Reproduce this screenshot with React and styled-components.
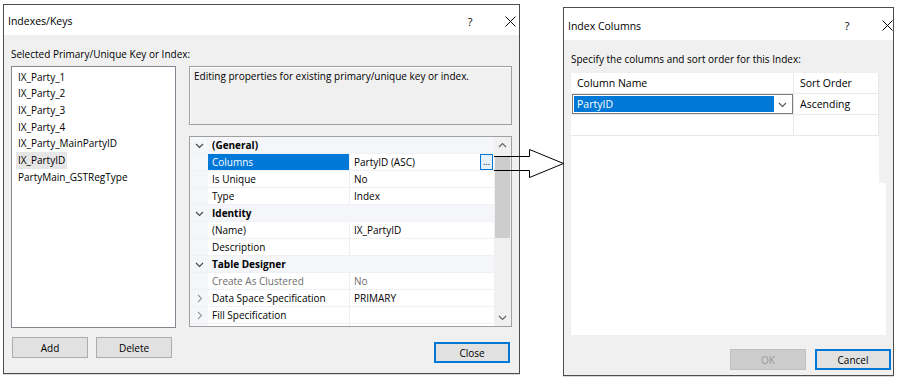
import React from "react";
import styled, { createGlobalStyle, css } from "styled-components";

const GlobalStyle = createGlobalStyle`
  html, body {
    margin: 0;
    padding: 0;
    background: #ffffff;
  }
  body {
    font-family: "Open Sans", "Noto Sans", sans-serif;
    font-size: 10px;
    color: #000;
  }
`;

const indexes = [
  "IX_Party_1",
  "IX_Party_2",
  "IX_Party_3",
  "IX_Party_4",
  "IX_Party_MainPartyID",
  "IX_PartyID",
  "PartyMain_GSTRegType"
];

const properties = [
  { category: true, name: "(General)" },
  { name: "Columns", value: "PartyID (ASC)", selected: true, ellipsis: true },
  { name: "Is Unique", value: "No" },
  { name: "Type", value: "Index" },
  { category: true, name: "Identity" },
  { name: "(Name)", value: "IX_PartyID" },
  { name: "Description", value: "" },
  { category: true, name: "Table Designer" },
  { name: "Create As Clustered", value: "No", disabled: true },
  { name: "Data Space Specification", value: "PRIMARY", expand: true },
  { name: "Fill Specification", value: "", expand: true },
  { name: "", value: "" }
];

const CloseGlyph = () => (
  <svg width="11" height="11" viewBox="0 0 11 11">
    <path d="M0.5 0.5 L10.5 10.5 M10.5 0.5 L0.5 10.5" stroke="#000" strokeWidth="1" fill="none" />
  </svg>
);

const Chevron = ({ dir = "down", color = "#555" }) => (
  <svg width="9" height="9" viewBox="0 0 9 9">
    {dir === "down" && <path d="M1 3 L4.5 6.5 L8 3" stroke={color} strokeWidth="1.1" fill="none" />}
    {dir === "up" && <path d="M1 6 L4.5 2.5 L8 6" stroke={color} strokeWidth="1.1" fill="none" />}
    {dir === "right" && <path d="M3 1 L6.5 4.5 L3 8" stroke={color} strokeWidth="1.1" fill="none" />}
  </svg>
);

const App = () => (
  <>
    <GlobalStyle />
    <Screen>
      <Dialog $top={4} $left={3} $width={517} $height={370}>
        <TitleBar $padTop={2}>
          <TitleText>Indexes/Keys</TitleText>
          <TitleActions $right={3}>
            <TitleButton>?</TitleButton>
            <TitleButton>
              <CloseGlyph />
            </TitleButton>
          </TitleActions>
        </TitleBar>
        <Body>
          <Caption>Selected Primary/Unique Key or Index:</Caption>
          <Panes>
            <ListPane>
              <ListBox>
                {indexes.map(name => (
                  <ListItem key={name} $selected={name === "IX_PartyID"}>
                    {name}
                  </ListItem>
                ))}
              </ListBox>
              <ButtonRow>
                <Button>Add</Button>
                <Button>Delete</Button>
              </ButtonRow>
            </ListPane>
            <DetailPane>
              <DescBox>Editing properties for existing primary/unique key or index.</DescBox>
              <PropGrid>
                <PropRows>
                  {properties.map((p, i) =>
                    p.category ? (
                      <CategoryRow key={i}>
                        <Gutter>
                          <Chevron dir="down" color="#444" />
                        </Gutter>
                        <CategoryName>{p.name}</CategoryName>
                      </CategoryRow>
                    ) : (
                      <PropRow key={i}>
                        <Gutter>{p.expand && <Chevron dir="right" color="#999" />}</Gutter>
                        <PropName $selected={p.selected} $disabled={p.disabled}>
                          {p.name}
                        </PropName>
                        <PropValue $disabled={p.disabled}>
                          {p.value}
                          {p.ellipsis && <EllipsisButton>...</EllipsisButton>}
                        </PropValue>
                      </PropRow>
                    )
                  )}
                </PropRows>
                <ScrollBar>
                  <ScrollArrow>
                    <Chevron dir="up" color="#606060" />
                  </ScrollArrow>
                  <ScrollTrack>
                    <ScrollThumb />
                  </ScrollTrack>
                  <ScrollArrow>
                    <Chevron dir="down" color="#606060" />
                  </ScrollArrow>
                </ScrollBar>
              </PropGrid>
              <FooterRow $pad={2}>
                <Button $default>Close</Button>
              </FooterRow>
            </DetailPane>
          </Panes>
        </Body>
      </Dialog>

      <Dialog $top={7} $left={43} $width={331} $height={369}>
        <TitleBar $height={32} $padTop={3}>
          <TitleText>Index Columns</TitleText>
          <TitleActions $right={0}>
            <TitleButton>?</TitleButton>
            <TitleButton>
              <CloseGlyph />
            </TitleButton>
          </TitleActions>
        </TitleBar>
        <Body $padRight={2}>
          <Caption $gap={7}>Specify the columns and sort order for this Index:</Caption>
          <ColumnGrid>
            <ColumnTable>
              <GridRow>
                <GridCell $width={223}>Column Name</GridCell>
                <GridCell $width={85}>Sort Order</GridCell>
              </GridRow>
              <GridRow>
                <GridCell $width={223} $flush>
                  <Combo>
                    <ComboValue>PartyID</ComboValue>
                    <ComboDrop>
                      <Chevron dir="down" color="#555" />
                    </ComboDrop>
                  </Combo>
                </GridCell>
                <GridCell $width={85}>Ascending</GridCell>
              </GridRow>
              <GridRow>
                <GridCell $width={223} />
                <GridCell $width={85} />
              </GridRow>
            </ColumnTable>
            <GridSide />
          </ColumnGrid>
          <FooterRow $gap={9} $top={14} $pad={0}>
            <Button $disabled>OK</Button>
            <Button $default>Cancel</Button>
          </FooterRow>
        </Body>
      </Dialog>

      <Pointer width="72" height="33" viewBox="0 0 72 33">
        <path
          d="M1 9.5 H36.5 V2.5 L70.5 16.5 L36.5 30.5 V23.5 H1"
          stroke="#000"
          strokeWidth="1"
          fill="none"
        />
      </Pointer>
    </Screen>
  </>
);

export default App;

const Screen = styled.div`
  position: relative;
  width: 900px;
  height: 379px;
  display: flex;
  align-items: flex-start;
  background: #fff;
  overflow: hidden;
`;

const Dialog = styled.div`
  box-sizing: border-box;
  margin-top: ${({ $top }) => $top}px;
  margin-left: ${({ $left }) => $left}px;
  width: ${({ $width }) => $width}px;
  height: ${({ $height }) => $height}px;
  border: 1px solid #4d4d4d;
  background: #f0f0f0;
  display: flex;
  flex-direction: column;
  box-shadow: 0 1px 0 #d8d8d8;
`;

const TitleBar = styled.div`
  box-sizing: border-box;
  height: ${({ $height }) => $height || 30}px;
  padding-top: ${({ $padTop }) => $padTop || 0}px;
  padding-left: 4px;
  background: #fff;
  display: flex;
  align-items: center;
  flex-shrink: 0;
`;

const TitleText = styled.div`
  flex: 1;
  font-size: 10.5px;
`;

const TitleActions = styled.div`
  display: flex;
  align-items: center;
  gap: 28px;
  padding-right: ${({ $right }) => $right}px;
`;

const TitleButton = styled.div`
  width: 12px;
  display: flex;
  justify-content: center;
  align-items: center;
  font-size: 11px;
`;

const Body = styled.div`
  flex: 1;
  display: flex;
  flex-direction: column;
  padding: 12px ${({ $padRight }) => $padRight ?? 7}px 0 7px;
`;

const Caption = styled.div`
  height: 14px;
  line-height: 14px;
  margin-bottom: ${({ $gap }) => $gap ?? 5}px;
`;

const Panes = styled.div`
  display: flex;
  gap: 13px;
`;

const ListPane = styled.div`
  width: 165px;
  display: flex;
  flex-direction: column;
`;

const ListBox = styled.div`
  box-sizing: border-box;
  height: 262px;
  background: #fff;
  border: 1px solid #828790;
  padding: 1.6px 0 0 4px;
  display: flex;
  flex-direction: column;
  align-items: flex-start;
`;

const ListItem = styled.div`
  height: 16.67px;
  line-height: 16.67px;
  padding: 0 2px;
  background: ${({ $selected }) => ($selected ? "#e6e6e6" : "transparent")};
`;

const ButtonRow = styled.div`
  display: flex;
  gap: 8px;
  margin-top: 9px;
  padding-left: 1px;
`;

const Button = styled.div`
  box-sizing: border-box;
  width: 76px;
  height: 21px;
  display: flex;
  align-items: center;
  justify-content: center;
  background: #e1e1e1;
  border: 1px solid #adadad;
  ${({ $default }) =>
    $default &&
    css`
      border-color: #0078d7;
      box-shadow: inset 0 0 0 1px #0078d7;
    `}
  ${({ $disabled }) =>
    $disabled &&
    css`
      background: #cccccc;
      border-color: #bfbfbf;
      color: #9a9a9a;
    `}
`;

const DetailPane = styled.div`
  width: 323px;
  display: flex;
  flex-direction: column;
`;

const DescBox = styled.div`
  box-sizing: border-box;
  height: 59px;
  padding: 2px 4px;
  border: 1px solid #a0a0a0;
  box-shadow: inset 1px 1px 0 #fff;
  background: #f0f0f0;
  line-height: 14px;
`;

const PropGrid = styled.div`
  box-sizing: border-box;
  margin-top: 11px;
  height: 191px;
  border: 1px solid #a0a0a0;
  background: #fff;
  display: flex;
  overflow: hidden;
`;

const PropRows = styled.div`
  width: 304px;
  display: flex;
  flex-direction: column;
`;

const rowBase = css`
  display: flex;
  height: 17px;
  flex-shrink: 0;
  box-sizing: border-box;
  border-bottom: 1px solid #eff1f4;
`;

const CategoryRow = styled.div`
  ${rowBase};
  background: #f4f6f9;
`;

const PropRow = styled.div`
  ${rowBase};
  background: #fff;
`;

const Gutter = styled.div`
  width: 18px;
  flex-shrink: 0;
  display: flex;
  align-items: center;
  justify-content: center;
  background: #f4f6f9;
`;

const CategoryName = styled.div`
  padding-left: 4px;
  line-height: 16px;
  font-weight: 700;
`;

const PropName = styled.div`
  box-sizing: border-box;
  width: 142px;
  padding-left: 4px;
  line-height: 16px;
  white-space: nowrap;
  overflow: hidden;
  border-right: 1px solid #eef0f3;
  color: ${({ $disabled }) => ($disabled ? "#6d6d6d" : "#000")};
  ${({ $selected }) =>
    $selected &&
    css`
      background: #0078d7;
      color: #fff;
    `}
`;

const PropValue = styled.div`
  position: relative;
  flex: 1;
  padding-left: 4px;
  line-height: 16px;
  color: ${({ $disabled }) => ($disabled ? "#6d6d6d" : "#000")};
`;

const EllipsisButton = styled.div`
  position: absolute;
  right: 1px;
  top: 0;
  box-sizing: border-box;
  width: 13px;
  height: 16px;
  border: 1px solid #0078d7;
  background: #e5f1fb;
  font-size: 9px;
  line-height: 14px;
  text-align: center;
`;

const ScrollBar = styled.div`
  width: 17px;
  background: #f0f0f0;
  display: flex;
  flex-direction: column;
  align-items: center;
`;

const ScrollArrow = styled.div`
  height: 17px;
  display: flex;
  align-items: center;
  justify-content: center;
`;

const ScrollTrack = styled.div`
  flex: 1;
  width: 15px;
`;

const ScrollThumb = styled.div`
  margin-top: 2px;
  height: 82px;
  background: #cdcdcd;
`;

const FooterRow = styled.div`
  display: flex;
  justify-content: flex-end;
  gap: ${({ $gap }) => $gap ?? 0}px;
  margin-top: ${({ $top }) => $top ?? 15}px;
  padding-right: ${({ $pad }) => $pad}px;
`;

const ColumnGrid = styled.div`
  display: flex;
  height: 262px;
  width: 315px;
  background: #fff;
`;

const ColumnTable = styled.div`
  width: 308px;
  display: flex;
  flex-direction: column;
`;

const GridSide = styled.div`
  width: 7px;
  height: 110px;
  background: #f0f0f0;
`;

const GridRow = styled.div`
  display: flex;
  height: 20px;
  border-bottom: 1px solid #e8e8e8;
`;

const GridCell = styled.div`
  box-sizing: border-box;
  width: ${({ $width }) => $width}px;
  padding-left: ${({ $flush }) => ($flush ? 1 : 6)}px;
  border-right: 1px solid #e8e8e8;
  display: flex;
  align-items: center;
  font-size: 10.5px;
`;

const Combo = styled.div`
  box-sizing: border-box;
  width: 222px;
  height: 20px;
  border: 1px solid #7a7a7a;
  display: flex;
  padding: 1px;
  background: #fff;
`;

const ComboValue = styled.div`
  flex: 1;
  background: #0078d7;
  color: #fff;
  padding-left: 3px;
  line-height: 16px;
`;

const ComboDrop = styled.div`
  width: 17px;
  display: flex;
  align-items: center;
  justify-content: center;
`;

const Pointer = styled.svg`
  position: absolute;
  left: 493px;
  top: 147px;
  overflow: visible;
`;
